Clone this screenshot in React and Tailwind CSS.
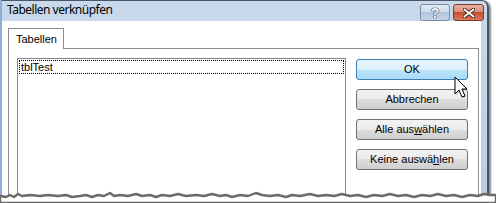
import React from 'react';

const buttons = [
    { label: 'OK', hot: true },
    { label: 'Abbrechen' },
    { label: 'Alle auswählen', pre: 'Alle aus', key: 'w', post: 'ählen' },
    { label: 'Keine auswählen', pre: 'Keine auswä', key: 'h', post: 'len' },
];

function DialogButton({ btn }) {
    const base = 'h-[21px] w-[112px] rounded-[3px] border flex items-center justify-center text-[11px] text-black';
    const look = btn.hot
        ? 'border-[#3c7fb1] bg-[linear-gradient(#eaf6fd_0%,#d9f0fc_50%,#bee6fd_50%,#a7d9f5_100%)]'
        : 'border-[#707070] bg-[linear-gradient(#f2f2f2_0%,#ebebeb_50%,#dddddd_50%,#cfcfcf_100%)]';
    return (
        <div className={`${base} ${look}`}>
            {btn.key ? (
                <span>
                    {btn.pre}<span className="underline">{btn.key}</span>{btn.post}
                </span>
            ) : (
                <span>{btn.label}</span>
            )}
        </div>
    );
}

// little x glyph for the close button
function CloseGlyph() {
    return (
        <svg width="12" height="10" viewBox="0 0 12 10">
            <path d="M1 1 L11 9 M11 1 L1 9" stroke="#3a1d17" strokeWidth="3.4" strokeLinecap="square" />
            <path d="M1.5 1.5 L10.5 8.5 M10.5 1.5 L1.5 8.5" stroke="#ffffff" strokeWidth="1.8" strokeLinecap="square" />
        </svg>
    );
}

export default function App() {
    return (
        <div className="relative w-[496px] h-[203px] bg-white overflow-hidden" style={{ fontFamily: '"Liberation Sans", Arial, sans-serif' }}>
            {/* Window */}
            <div className="w-[489px] h-[203px] flex flex-col rounded-tr-[7px] border-t border-r-2 border-[#4a5568] border-l-2 border-l-[#8fb0d6] bg-[linear-gradient(#c9d9ec,#b9cde4)] shadow-[2px_1px_2px_rgba(0,0,0,0.45)]">
                {/* Title bar */}
                <div className="h-[24px] flex items-center justify-between pr-[3px] pl-[5px]">
                    <span className="text-[12px] tracking-[-0.5px] text-black pb-[2px]" style={{ fontFamily: '"Noto Sans", "Open Sans", sans-serif' }}>
                        Tabellen verknüpfen
                    </span>
                    <div className="flex gap-[3px] self-start mt-[3px]">
                        <div className="w-[30px] h-[17px] rounded-[3px] border border-[#7a8ba1] bg-[linear-gradient(#e2ebf5_0%,#cbd9ea_50%,#b3c6de_50%,#c4d4e8_100%)] flex items-center justify-center">
                            <span className="text-[14px] font-bold leading-none text-[#f4f7fb] [text-shadow:0_0_1px_#2c3e55,0_0_1px_#2c3e55,0_0_1px_#2c3e55]">?</span>
                        </div>
                        <div className="w-[31px] h-[17px] rounded-[3px] border border-[#7c3a2c] bg-[linear-gradient(#e8b0a2_0%,#d88b78_50%,#c5502f_50%,#d7775c_100%)] flex items-center justify-center">
                            <CloseGlyph />
                        </div>
                    </div>
                </div>

                {/* Client area */}
                <div className="flex-1 bg-white mr-[6px] pl-[6px] pr-[2px] pt-[7px]">
                    {/* Tab header */}
                    <div className="flex">
                        <div className="w-[56px] h-[21px] border border-b-0 border-[#898c95] bg-white flex items-center pl-[7px] text-[11px] text-black -mb-px relative">
                            Tabellen
                        </div>
                    </div>
                    {/* Tab panel */}
                    <div className="border border-[#898c95] h-[160px] flex gap-[10px] pl-[8px] pr-[8px] pt-[9px]">
                        <div className="w-[329px] border border-[#828790] p-px self-stretch">
                            <div className="h-[14px] border border-dotted border-black flex items-center pl-px text-[11px] text-black">
                                tblTest
                            </div>
                        </div>
                        <div className="flex flex-col gap-[9px] pt-px">
                            {buttons.map((b) => (
                                <DialogButton key={b.label} btn={b} />
                            ))}
                        </div>
                    </div>
                </div>
            </div>

            {/* Mouse cursor over OK */}
            <svg className="absolute left-[454px] top-[76px]" width="16" height="24" viewBox="0 0 16 24">
                <path d="M2 2 L2 19 L6 15 L9 22 L12 21 L9 14 L14 14 Z" fill="#888" opacity="0.45" />
                <path d="M1 1 L1 18 L5 14 L8 21 L11 20 L8 13 L13 13 Z" fill="#fff" stroke="#000" strokeWidth="1" strokeLinejoin="round" />
            </svg>

            {/* Torn edge */}
            <svg className="absolute left-0 bottom-0" width="496" height="14" viewBox="0 0 496 14">
                <path
                    d="M0 7 L6 8 L10 6 L14 8 L18 5 L22 7 L30 6 L40 7 L48 6 L58 7 L66 6 L72 8 L80 7 L86 6 L92 8 L98 6 L104 7 L110 4 L114 7 L120 6 L128 7 L136 5 L142 7 L150 6 L156 8 L162 6 L170 7 L178 5 L186 7 L196 6 L204 7 L212 5 L220 7 L226 6 L232 8 L240 6 L248 7 L256 4 L262 6 L270 7 L278 6 L286 8 L292 6 L300 7 L310 5 L318 7 L326 6 L334 7 L342 5 L350 7 L358 6 L366 8 L374 6 L382 7 L390 5 L398 7 L406 6 L414 8 L422 6 L430 7 L438 5 L446 7 L454 6 L462 8 L470 6 L478 7 L484 5 L490 6 L496 6 L496 14 L0 14 Z"
                    fill="#ffffff"
                    stroke="#6a6a6a"
                    strokeWidth="2.4"
                    strokeLinejoin="round"
                />
            </svg>
        </div>
    );
}
